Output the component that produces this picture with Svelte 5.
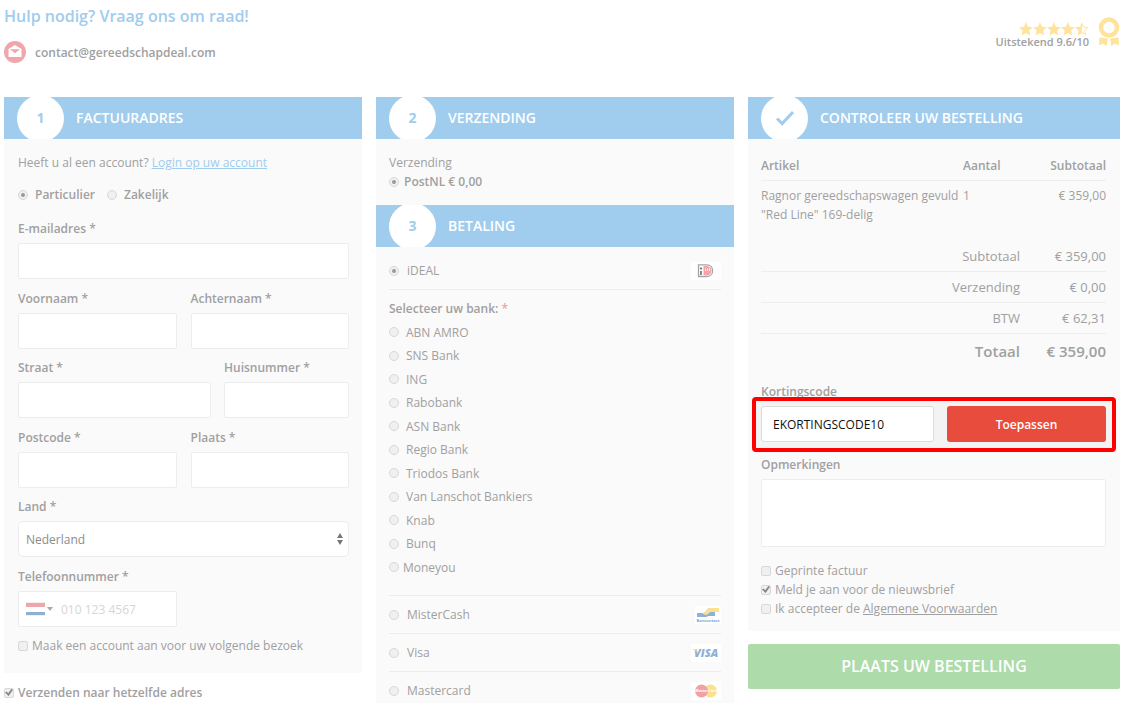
<script lang="ts">
	const banks = [
		'ABN AMRO',
		'SNS Bank',
		'ING',
		'Rabobank',
		'ASN Bank',
		'Regio Bank',
		'Triodos Bank',
		'Van Lanschot Bankiers',
		'Knab',
		'Bunq',
		'Moneyou'
	];

	const totals = [
		{ label: 'Subtotaal', amount: '€ 359,00' },
		{ label: 'Verzending', amount: '€ 0,00' },
		{ label: 'BTW', amount: '€ 62,31' }
	];

	let customerType = $state('particulier');
	let payment = $state('ideal');
	let bank = $state('');
	let discountCode = $state('EKORTINGSCODE10');
</script>

{#snippet sectionTitle(step: string, title: string)}
	<h2 class="section-title">
		<span class="step">
			{#if step === 'check'}
				<svg width="20" height="16" viewBox="0 0 20 16" aria-hidden="true">
					<path d="M2 8.5 7.2 13.5 18 2" fill="none" stroke="currentColor" stroke-width="3" />
				</svg>
			{:else}
				{step}
			{/if}
		</span>
		{title}
	</h2>
{/snippet}

{#snippet textField(id: string, label: string)}
	<div class="field">
		<label for={id}>{label} *</label>
		<input type="text" {id} />
	</div>
{/snippet}

<div class="page">
	<header class="top">
		<div class="help">
			<h1>Hulp nodig? Vraag ons om raad!</h1>
			<div class="contact">
				<svg width="22" height="22" viewBox="0 0 22 22" aria-hidden="true">
					<circle cx="11" cy="11" r="11" fill="#f0a6aa" />
					<path d="M4.5 8 11 4 17.5 8V16H4.5Z" fill="#fff" />
					<path d="M6 8.3H16L11 12.2Z" fill="#f0a6aa" />
				</svg>
				<span>contact@gereedschapdeal.com</span>
			</div>
		</div>
		<div class="rating">
			<div class="score">
				<svg width="70" height="14" viewBox="0 0 71 14" aria-hidden="true">
					{#each [0, 1, 2, 3] as i}
						<path
							transform="translate({i * 14.2} 0)"
							d="M7 0 9 4.6 14 5.1 10.3 8.6 11.3 13.5 7 11 2.7 13.5 3.7 8.6 0 5.1 5 4.6Z"
							fill="#ffe39b"
						/>
					{/each}
					<g transform="translate(56.8 0)">
						<path d="M7 0V11L2.7 13.5 3.7 8.6 0 5.1 5 4.6Z" fill="#ffe39b" />
						<path
							d="M7 1 8.6 5 13 5.5 9.8 8.5 10.7 12.7 7 10.5"
							fill="none"
							stroke="#ffe39b"
						/>
					</g>
				</svg>
				<span>Uitstekend 9.6/10</span>
			</div>
			<svg width="22" height="30" viewBox="0 0 22 30" aria-hidden="true">
				<circle cx="11" cy="10.5" r="8" fill="none" stroke="#ffe39b" stroke-width="4.5" />
				<path d="M1.5 20.5 10 21.5 8.5 29 5 26.5 1 28.5Z" fill="#ffe39b" />
				<path d="M20.5 20.5 12 21.5 13.5 29 17 26.5 21 28.5Z" fill="#ffe39b" />
			</svg>
		</div>
	</header>

	<main class="columns">
		<section class="column">
			{@render sectionTitle('1', 'FACTUURADRES')}
			<div class="panel billing">
				<p class="login">Heeft u al een account? <a href="#login">Login op uw account</a></p>
				<div class="types">
					<label>
						<input type="radio" name="type" value="particulier" bind:group={customerType} />
						Particulier
					</label>
					<label>
						<input type="radio" name="type" value="zakelijk" bind:group={customerType} />
						Zakelijk
					</label>
				</div>
				{@render textField('email', 'E-mailadres')}
				<div class="split">
					{@render textField('firstname', 'Voornaam')}
					{@render textField('lastname', 'Achternaam')}
				</div>
				<div class="split street">
					{@render textField('street', 'Straat')}
					{@render textField('number', 'Huisnummer')}
				</div>
				<div class="split">
					{@render textField('zipcode', 'Postcode')}
					{@render textField('city', 'Plaats')}
				</div>
				<div class="field">
					<label for="country">Land *</label>
					<div class="select">
						<select id="country">
							<option>Nederland</option>
						</select>
						<svg width="6" height="12" viewBox="0 0 6 12" aria-hidden="true">
							<path d="M3 0 6 5H0ZM3 12 0 7H6Z" fill="#777" />
						</svg>
					</div>
				</div>
				<div class="split">
					<div class="field">
						<label for="phone">Telefoonnummer *</label>
						<div class="phone">
							<svg width="26" height="14" viewBox="0 0 26 14" aria-hidden="true">
								<rect width="19" height="14" fill="#f0f0f0" />
								<rect y="1" width="19" height="4" fill="#f0a6aa" />
								<rect y="5" width="19" height="5" fill="#fff" />
								<rect y="10" width="19" height="3" fill="#8fb0d3" />
								<path d="M21 5H27L24 9Z" fill="#aaa" />
							</svg>
							<input type="tel" id="phone" placeholder="010 123 4567" />
						</div>
					</div>
				</div>
				<label class="check"><input type="checkbox" />Maak een account aan voor uw volgende bezoek</label>
			</div>
			<label class="check same-address">
				<input type="checkbox" checked />Verzenden naar hetzelfde adres
			</label>
		</section>

		<section class="column">
			{@render sectionTitle('2', 'VERZENDING')}
			<div class="panel shipping">
				<p>Verzending</p>
				<label><input type="radio" name="shipping" checked /><span>PostNL € 0,00</span></label>
			</div>
			{@render sectionTitle('3', 'BETALING')}
			<div class="panel payment">
				<div class="method first">
					<label><input type="radio" name="payment" value="ideal" bind:group={payment} />iDEAL</label>
					<svg width="30" height="18" viewBox="0 0 30 18" aria-hidden="true">
						<rect width="30" height="18" fill="#fff" />
						<path d="M7.5 2.8H16C23.5 2.8 23.5 14.5 16 14.5H7.5Z" fill="#fff" stroke="#a5a5a5" stroke-width="1.3" />
						<path d="M12.5 4H16C22 4 22 13.3 16 13.3H12.5Z" fill="#f3a3aa" />
						<circle cx="10" cy="6.5" r="1.2" fill="#888" />
						<path d="M9 9H11V13H9Z" fill="#888" />
						<path d="M14.5 6.5V9M16.5 6.5V9M18.5 6V9" stroke="#fff" stroke-width="0.8" />
					</svg>
				</div>
				<fieldset class="banks">
					<legend>Selecteer uw bank: <em>*</em></legend>
					{#each banks as name}
						<label><input type="radio" name="bank" value={name} bind:group={bank} />{name}</label>
					{/each}
				</fieldset>
				<div class="method">
					<label>
						<input type="radio" name="payment" value="mistercash" bind:group={payment} />MisterCash
					</label>
					<svg width="26" height="18" viewBox="0 0 26 18" aria-hidden="true">
						<rect width="26" height="18" fill="#fff" />
						<path d="M2 7H8C11 7 12 2 15 2H24V6H18C15 6 14 11 11 11H2Z" fill="#8eb1d4" />
						<path d="M7 7.5C11 7 12 2 15 2H24V6H16C14 6 13 9 11 9Z" fill="#fde08d" />
						<path d="M16 6H20V10H12C14 9 14.5 7 16 6Z" fill="#8eb1d4" />
						<text x="13" y="16" text-anchor="middle" font-size="4" font-weight="700" fill="#79a9d8">Bancontact</text>
					</svg>
				</div>
				<div class="method">
					<label><input type="radio" name="payment" value="visa" bind:group={payment} />Visa</label>
					<svg width="30" height="18" viewBox="0 0 30 18" aria-hidden="true">
						<rect width="30" height="18" fill="#fff" />
						<text x="3" y="13" font-size="11" font-weight="800" font-style="italic" fill="#8fafd3">VISA</text>
						<path d="M2 5H5.5L7 9C6 7 4 6 2 5.5Z" fill="#f8d795" />
					</svg>
				</div>
				<div class="method">
					<label>
						<input type="radio" name="payment" value="mastercard" bind:group={payment} />Mastercard
					</label>
					<svg width="30" height="18" viewBox="0 0 30 18" aria-hidden="true">
						<rect width="30" height="18" fill="#fff" />
						<circle cx="19.5" cy="9" r="6.5" fill="#fde08d" />
						<circle cx="10.5" cy="9" r="6.5" fill="#f0a1a5" />
						<text x="15" y="10" text-anchor="middle" font-size="4" font-weight="700" font-style="italic" fill="#fff">MasterCard</text>
					</svg>
				</div>
			</div>
		</section>

		<section class="column">
			{@render sectionTitle('check', 'CONTROLEER UW BESTELLING')}
			<div class="panel order">
				<table class="items">
					<thead>
						<tr><th>Artikel</th><th class="count">Aantal</th><th class="price">Subtotaal</th></tr>
					</thead>
					<tbody>
						<tr>
							<td>Ragnor gereedschapswagen gevuld "Red Line" 169-delig</td>
							<td>1</td>
							<td class="price">€ 359,00</td>
						</tr>
					</tbody>
				</table>
				<table class="totals">
					<tbody>
						{#each totals as row}
							<tr><th>{row.label}</th><td>{row.amount}</td></tr>
						{/each}
						<tr class="grand"><th>Totaal</th><td>€ 359,00</td></tr>
					</tbody>
				</table>

				<label class="caption" for="discount">Kortingscode</label>
				<div class="discount">
					<input type="text" id="discount" bind:value={discountCode} />
					<button type="button">Toepassen</button>
				</div>

				<label class="caption" for="remarks">Opmerkingen</label>
				<textarea id="remarks"></textarea>

				<label class="check"><input type="checkbox" />Geprinte factuur</label>
				<label class="check"><input type="checkbox" checked />Meld je aan voor de nieuwsbrief</label>
				<label class="check">
					<input type="checkbox" /><span>Ik accepteer de <a href="#terms">Algemene Voorwaarden</a></span>
				</label>
			</div>
			<button type="submit" class="place-order">PLAATS UW BESTELLING</button>
		</section>
	</main>
</div>

<style>
	:global(body) {
		background: #fff;
	}

	.page {
		--blue: #a0ccee;
		--line: #ededed;
		height: 100vh;
		overflow: hidden;
		box-sizing: border-box;
		padding: 0 4px;
		font-family: 'Open Sans', sans-serif;
		font-size: 12px;
		line-height: 19px;
		color: #a0a0a0;
	}

	.page *,
	.page *::before {
		box-sizing: border-box;
	}

	h1,
	h2,
	p {
		margin: 0;
	}

	input,
	select,
	textarea,
	button {
		font: inherit;
		color: inherit;
	}

	/* Header */
	.top {
		display: flex;
		justify-content: space-between;
		height: 97px;
		padding-top: 5px;
	}

	h1 {
		font-size: 16px;
		font-weight: 600;
		line-height: 22px;
		color: var(--blue);
	}

	.contact {
		display: flex;
		align-items: center;
		gap: 9px;
		margin-top: 14px;
		font-weight: 600;
	}

	.rating {
		display: flex;
		align-items: flex-start;
		gap: 9px;
		padding-top: 12px;
	}

	.score {
		display: flex;
		flex-direction: column;
		align-items: flex-end;
		padding-top: 5px;
		font-size: 11px;
		font-weight: 600;
		line-height: 12px;
	}

	/* Columns */
	.columns {
		display: grid;
		grid-template-columns: 358fr 358fr 372fr;
		align-items: start;
		gap: 14px;
	}

	.column {
		min-width: 0;
	}

	.section-title {
		display: flex;
		align-items: center;
		gap: 12px;
		height: 42px;
		padding-left: 13px;
		overflow: hidden;
		background: var(--blue);
		color: #fff;
		font-size: 14px;
		font-weight: 600;
		line-height: 20px;
	}

	.step {
		display: flex;
		flex: none;
		align-items: center;
		justify-content: center;
		width: 47px;
		height: 47px;
		border-radius: 50%;
		background: #fff;
		color: var(--blue);
		font-weight: 700;
	}

	.panel {
		padding: 14px 13px;
		background: #fafafa;
	}

	/* Controls */
	input[type='text'],
	.phone,
	.select,
	textarea {
		display: block;
		width: 100%;
		height: 36px;
		border: 1px solid var(--line);
		border-radius: 2px;
		background: #fff;
		outline: none;
	}

	input[type='radio'],
	input[type='checkbox'] {
		appearance: none;
		display: grid;
		flex: none;
		place-items: center;
		width: 10px;
		height: 10px;
		margin: 0;
		border: 1px solid #d8d8d8;
		background: #f0f0f0;
	}

	input[type='radio'] {
		border-radius: 50%;
	}

	input[type='checkbox'] {
		border-radius: 2px;
	}

	input[type='radio']:checked::before {
		content: '';
		width: 4px;
		height: 4px;
		border-radius: 50%;
		background: #999;
	}

	input[type='checkbox']:checked::before {
		content: '';
		width: 8px;
		height: 7px;
		background: #858585;
		clip-path: polygon(0 50%, 20% 35%, 40% 60%, 80% 0, 100% 12%, 45% 100%);
	}

	.check {
		display: flex;
		align-items: center;
		gap: 4px;
	}

	/* Billing */
	.billing {
		padding-left: 14px;
		padding-bottom: 18px;
	}

	.login a {
		color: var(--blue);
	}

	.types {
		display: flex;
		gap: 12px;
		margin: 13px 0 15px;
		font-weight: 600;
	}

	.types label {
		display: flex;
		align-items: center;
		gap: 7px;
	}

	.field {
		margin-bottom: 10px;
	}

	.field > label {
		display: block;
		margin-bottom: 5px;
		font-weight: 600;
	}

	.split {
		display: grid;
		grid-template-columns: minmax(0, 1fr) minmax(0, 1fr);
		gap: 14px;
	}

	.split .field {
		margin-bottom: 9px;
	}

	.split.street {
		grid-template-columns: 193fr 125fr;
		gap: 13px;
	}

	.split.street .field {
		margin-bottom: 10px;
	}

	.select {
		display: flex;
		align-items: center;
		padding: 0 5px 0 7px;
		border-radius: 5px;
	}

	.select select {
		flex: 1;
		appearance: none;
		border: 0;
		background: none;
		outline: none;
		padding: 0;
		color: #8c8c8c;
	}

	.phone {
		display: flex;
		align-items: center;
		gap: 9px;
		padding-left: 7px;
	}

	.phone svg {
		flex: none;
		overflow: visible;
	}

	.phone input {
		flex: 1;
		min-width: 0;
		padding: 0;
		border: 0;
		background: none;
		outline: none;
	}

	.phone input::placeholder {
		color: #d6d6d6;
		opacity: 1;
	}

	.same-address {
		margin-top: 10px;
		font-weight: 600;
	}

	/* Shipping and payment */
	.shipping label {
		display: flex;
		align-items: center;
		gap: 5px;
		font-weight: 600;
	}

	.method {
		display: flex;
		align-items: center;
		justify-content: space-between;
		height: 38px;
		border-top: 1px solid var(--line);
	}

	.method.first {
		border-top: 0;
		border-bottom: 1px solid var(--line);
	}

	.method label {
		display: flex;
		align-items: center;
		gap: 8px;
	}

	.payment {
		padding-top: 5px;
	}

	.banks {
		margin: 0;
		padding: 0 0 16px;
		border: 0;
	}

	.banks legend {
		padding: 9px 0 2px;
		font-weight: 600;
	}

	.banks em {
		color: #f0a1a5;
		font-style: normal;
	}

	.banks label {
		display: flex;
		align-items: center;
		gap: 7px;
		height: 24px;
	}

	.banks label:nth-of-type(even) {
		height: 23px;
	}

	.banks label:last-child {
		gap: 4px;
	}

	/* Order */
	.order {
		padding: 14px 14px 13px 13px;
	}

	table {
		width: 100%;
		border-collapse: collapse;
	}

	th,
	td {
		padding: 0;
		text-align: left;
		vertical-align: top;
		font-weight: 400;
	}

	.items th {
		padding: 3px 0 5px;
		border-bottom: 1px solid var(--line);
		font-weight: 600;
	}

	.items td {
		padding-top: 5px;
	}

	.items .count {
		width: 73px;
	}

	.items .price {
		width: 70px;
		text-align: right;
	}

	.totals {
		margin-top: 16px;
		font-size: 13px;
	}

	.totals th,
	.totals td {
		height: 31px;
		padding-top: 2px;
		border-bottom: 1px solid var(--line);
		text-align: right;
		vertical-align: middle;
	}

	.totals td {
		width: 86px;
	}

	.totals .grand th,
	.totals .grand td {
		height: 36px;
		padding-top: 0;
		border-bottom: 0;
		font-size: 15px;
		font-weight: 600;
	}

	.caption {
		display: block;
		margin-top: 13px;
		margin-bottom: 5px;
		font-weight: 600;
	}

	.discount {
		position: relative;
		isolation: isolate;
		display: grid;
		grid-template-columns: 173fr 159fr;
		gap: 13px;
	}

	.discount::before {
		content: '';
		position: absolute;
		z-index: -1;
		inset: -9px -10px -10px -9px;
		border: 4px solid #f00;
		border-radius: 4px;
		background: #f3f3f3;
	}

	.discount input[type='text'] {
		padding: 0 11px;
		border-color: #dcdcdc;
		border-radius: 3px;
		color: #111;
	}

	.discount button {
		border: 0;
		border-radius: 3px;
		background: #e84c3d;
		color: #fff;
		font-weight: 600;
	}

	textarea {
		height: 68px;
		margin-bottom: 14px;
		resize: none;
	}

	.order .check a {
		color: inherit;
	}

	.place-order {
		display: block;
		width: 100%;
		height: 45px;
		margin-top: 13px;
		border: 0;
		border-radius: 2px;
		background: #addbaa;
		color: #fff;
		font-size: 16px;
		font-weight: 600;
	}
</style>
